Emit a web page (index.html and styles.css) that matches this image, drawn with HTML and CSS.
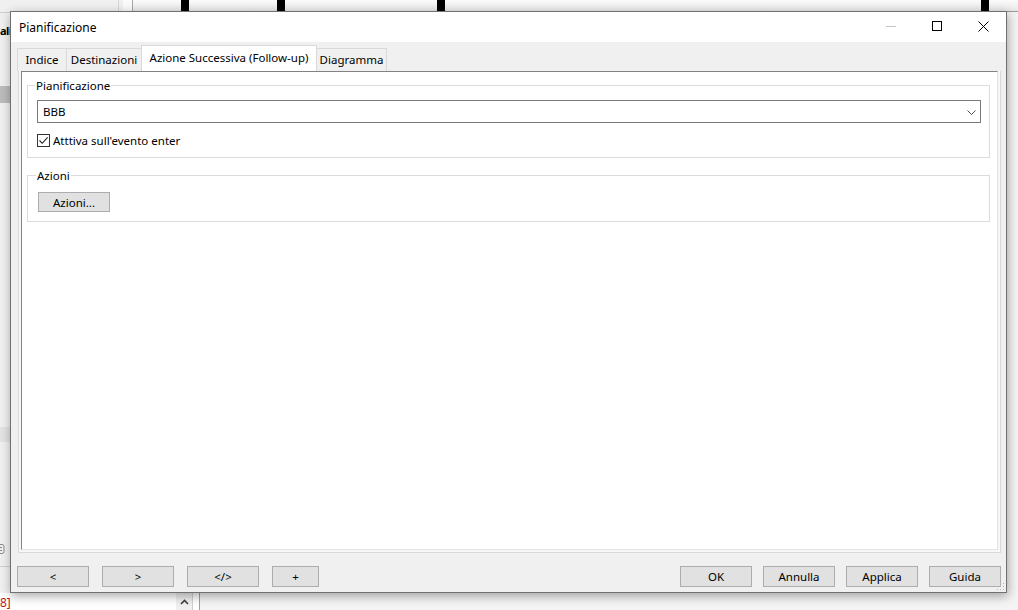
FILE: index.html
```html
<!DOCTYPE html>
<html lang="it">
<head>
  <meta charset="UTF-8">
  <title>Pianificazione</title>
  <link rel="stylesheet" href="styles.css">
</head>
<body>
<div class="desktop">

  <!-- main application window, partly hidden behind the dialog -->
  <div class="app">
    <div class="app-sidebar">
      <div class="sidebar-head"></div>
      <div class="sidebar-title">ali</div>
      <div class="sidebar-row sidebar-row-selected"></div>
      <div class="sidebar-row sidebar-row-hover"></div>
      <svg class="sidebar-icon" width="6" height="12" viewBox="0 0 6 12"><rect x="-4" y="1.5" width="8" height="9" rx="2" fill="none" stroke="#8a8a8a"/><path d="M-2 4.5 H2 M-2 7.5 H2" stroke="#8a8a8a"/></svg>
      <div class="sidebar-foot"></div>
    </div>
    <div class="app-splitter"></div>
    <div class="app-main">
      <div class="ruler">
        <span class="ruler-mark" style="left:48px"></span>
        <span class="ruler-mark" style="left:144px"></span>
        <span class="ruler-mark" style="left:304px"></span>
        <span class="ruler-mark" style="left:848px"></span>
      </div>
    </div>
    <div class="app-log">
      <span class="log-line">8]</span>
      <div class="log-scroll">
        <svg width="9" height="6" viewBox="0 0 9 6"><path d="M1 5 L4.5 1.5 L8 5" fill="none" stroke="#404040" stroke-width="1.6"/></svg>
      </div>
    </div>
  </div>

  <!-- Pianificazione dialog -->
  <div class="dialog">
    <div class="titlebar">
      <span class="title">Pianificazione</span>
      <div class="caption-buttons">
        <span class="caption-btn">
          <svg width="10" height="10" viewBox="0 0 10 10"><path d="M0 5.5 H10" stroke="#c4c4c4" stroke-width="1"/></svg>
        </span>
        <span class="caption-btn">
          <svg width="10" height="10" viewBox="0 0 10 10"><rect x="0.5" y="0.5" width="9" height="9" fill="none" stroke="#000" stroke-width="1"/></svg>
        </span>
        <span class="caption-btn">
          <svg width="11" height="11" viewBox="0 0 11 11"><path d="M0.5 0.5 L10.5 10.5 M10.5 0.5 L0.5 10.5" stroke="#000" stroke-width="1"/></svg>
        </span>
      </div>
    </div>

    <div class="dialog-body">
      <div class="tabs">
        <div class="tab tab-index">Indice</div>
        <div class="tab tab-dest">Destinazioni</div>
        <div class="tab tab-follow active">Azione Successiva (Follow-up)</div>
        <div class="tab tab-diagram">Diagramma</div>
      </div>

      <div class="tab-panel">
        <div class="tab-page">
          <fieldset class="group group-plan">
            <legend>Pianificazione</legend>
            <div class="combo">
              <span>BBB</span>
              <svg width="9" height="5" viewBox="0 0 9 5"><path d="M0.5 0.5 L4.5 4.5 L8.5 0.5" fill="none" stroke="#505050" stroke-width="1"/></svg>
            </div>
            <label class="check">
              <span class="check-box">
                <svg width="11" height="11" viewBox="0 0 11 11"><path d="M1.5 5.5 L4.2 8.3 L9.6 2.3" fill="none" stroke="#222" stroke-width="1.1"/></svg>
              </span>
              Atttiva sull'evento enter
            </label>
          </fieldset>

          <fieldset class="group group-actions">
            <legend>Azioni</legend>
            <button class="btn">Azioni...</button>
          </fieldset>
        </div>
      </div>

      <div class="button-bar">
        <div class="nav-buttons">
          <button class="btn">&lt;</button>
          <button class="btn">&gt;</button>
          <button class="btn">&lt;/&gt;</button>
          <button class="btn btn-small">+</button>
        </div>
        <div class="dialog-buttons">
          <button class="btn">OK</button>
          <button class="btn">Annulla</button>
          <button class="btn">Applica</button>
          <button class="btn">Guida</button>
        </div>
      </div>
    </div>

    <svg class="grip" width="9" height="9" viewBox="0 0 9 9">
      <rect x="7" y="1" width="1" height="1" fill="#b5b5b5"/>
      <rect x="4" y="4" width="1" height="1" fill="#b5b5b5"/>
      <rect x="7" y="4" width="1" height="1" fill="#b5b5b5"/>
      <rect x="1" y="7" width="1" height="1" fill="#b5b5b5"/>
      <rect x="4" y="7" width="1" height="1" fill="#b5b5b5"/>
      <rect x="7" y="7" width="1" height="1" fill="#b5b5b5"/>
    </svg>
  </div>

</div>
</body>
</html>
```

FILE: styles.css
```css
* {
  box-sizing: border-box;
}
html, body {
  margin: 0;
}
body {
  width: 1018px;
  height: 610px;
  overflow: hidden;
  font-family: "Noto Sans", sans-serif;
  font-size: 11.5px;
  color: #000;
  background: #f0f0f0;
}
.desktop {
  position: relative;
  width: 1018px;
  height: 610px;
}

/* background application */
.app {
  position: absolute;
  inset: 0;
  background: #f0f0f0;
}
.app-sidebar {
  position: absolute;
  left: 0;
  top: 0;
  width: 119px;
  height: 593px;
  background: #f0f0f0;
  border-right: 1px solid #d5d5d5;
  overflow: hidden;
}
.sidebar-head {
  height: 13px;
  border-bottom: 1px solid #cfcfcf;
}
.sidebar-title {
  position: absolute;
  left: 0;
  top: 23px;
  font-size: 11px;
  font-weight: bold;
  letter-spacing: -0.6px;
  white-space: nowrap;
}
.sidebar-row {
  position: absolute;
  left: 0;
  right: 0;
}
.sidebar-row-selected {
  top: 86px;
  height: 17px;
  background: #bcbcbc;
}
.sidebar-row-hover {
  top: 427px;
  height: 15px;
  background: #e3e3e3;
}
.sidebar-icon {
  position: absolute;
  left: 0;
  top: 543px;
}
.sidebar-foot {
  position: absolute;
  left: 0;
  right: 0;
  top: 566px;
  border-top: 1px solid #cfcfcf;
}
.app-splitter {
  position: absolute;
  left: 119px;
  top: 0;
  width: 14px;
  height: 593px;
  border-left: 4px solid #f0f0f0;
  border-right: 1px solid #a8a8a8;
  background: #fafafa;
}
.app-main {
  position: absolute;
  left: 133px;
  top: 0;
  right: 0;
  bottom: 0;
  background: #f4f4f4;
}
.ruler {
  position: relative;
  height: 12px;
  background: linear-gradient(#fbfbfb, #e8e8e8);
  border-bottom: 1px solid #9a9a9a;
}
.ruler-mark {
  position: absolute;
  top: 0;
  width: 8px;
  height: 11px;
  background: #000;
}
.app-log {
  position: absolute;
  left: 0;
  top: 593px;
  width: 200px;
  height: 17px;
  background: #fff;
  border-right: 1px solid #a0a0a0;
}
.log-line {
  position: absolute;
  left: 0;
  top: 1px;
  font-size: 12px;
  color: #c01818;
  white-space: nowrap;
}
.log-scroll {
  position: absolute;
  left: 176px;
  top: 0;
  width: 17px;
  height: 17px;
  background: #f0f0f0;
  border-right: 1px solid #d0d0d0;
  display: flex;
  align-items: center;
  justify-content: center;
}

/* dialog window */
.dialog {
  position: absolute;
  left: 10px;
  top: 11px;
  width: 997px;
  height: 582px;
  border: 1px solid #707070;
  background: #f0f0f0;
  box-shadow: 1px 3px 10px rgba(0, 0, 0, 0.35);
  display: flex;
  flex-direction: column;
}
.titlebar {
  height: 30px;
  flex: none;
  background: #fff;
  display: flex;
  align-items: center;
  justify-content: space-between;
}
.title {
  padding-left: 8px;
  font-size: 12px;
}
.caption-buttons {
  display: flex;
  height: 100%;
}
.caption-btn {
  width: 46px;
  height: 30px;
  display: flex;
  align-items: center;
  justify-content: center;
}
.caption-btn svg {
  margin-top: -2px;
}

.dialog-body {
  flex: 1;
  display: flex;
  flex-direction: column;
  padding: 4px 5px 5px 6px;
}

/* tabs */
.tabs {
  height: 25px;
  flex: none;
  display: flex;
  align-items: flex-end;
}
.tab {
  height: 23px;
  padding-top: 2px;
  line-height: 17px;
  text-align: center;
  white-space: nowrap;
  background: #f0f0f0;
  border: 1px solid #d9d9d9;
  border-bottom: none;
  margin-left: -1px;
}
.tab:first-child {
  margin-left: 0;
}
.tab.active {
  position: relative;
  z-index: 1;
  height: 26px;
  padding-top: 3px;
  background: #fff;
}
.tab-index { width: 50px; }
.tab-dest { width: 76px; }
.tab-follow { width: 176px; }
.tab-diagram { width: 71px; }

.tab-panel {
  flex: 1;
  display: flex;
  margin-left: 1px;
  border: 1px solid #d9d9d9;
  border-top: none;
  padding: 0 2px 2px;
  background: #f7f7f7;
}
.tab-page {
  flex: 1;
  background: #fff;
  border-top: 1px solid #828282;
  border-left: 1px solid #828282;
  border-right: 1px solid #e3e3e3;
  border-bottom: 1px solid #e3e3e3;
  padding: 5px 7px 5px 5px;
}

/* group boxes */
.group {
  margin: 0;
  min-width: 0;
  border: 1px solid #dcdcdc;
  padding: 6px 8px 8px 9px;
}
.group legend {
  padding: 0 1px;
  margin-left: -2px;
  line-height: 17px;
}
.group-plan {
  padding-bottom: 9px;
}
.group-actions {
  margin-top: 9px;
  padding: 8px 8px 9px 10px;
}

.combo {
  height: 23px;
  border: 1px solid #7a7a7a;
  background: #fff;
  display: flex;
  align-items: center;
  justify-content: space-between;
  padding: 0 4px 0 5px;
}
.combo svg {
  margin-top: 1px;
}

.check {
  margin-top: 10px;
  height: 15px;
  display: flex;
  align-items: center;
  gap: 3px;
}
.check-box {
  width: 13px;
  height: 13px;
  border: 1px solid #333;
  background: #fff;
  display: flex;
}

/* push buttons */
.btn {
  width: 72px;
  height: 21px;
  padding: 0;
  font-family: inherit;
  font-size: inherit;
  color: #000;
  background: #e1e1e1;
  border: 1px solid #adadad;
}
.btn-small {
  width: 47px;
}
.group-actions .btn {
  height: 20px;
}

.button-bar {
  flex: none;
  margin-top: 13px;
  display: flex;
  justify-content: space-between;
}
.nav-buttons {
  display: flex;
  gap: 13px;
}
.dialog-buttons {
  display: flex;
  gap: 11px;
}

.grip {
  position: absolute;
  right: 1px;
  bottom: 1px;
}
```
